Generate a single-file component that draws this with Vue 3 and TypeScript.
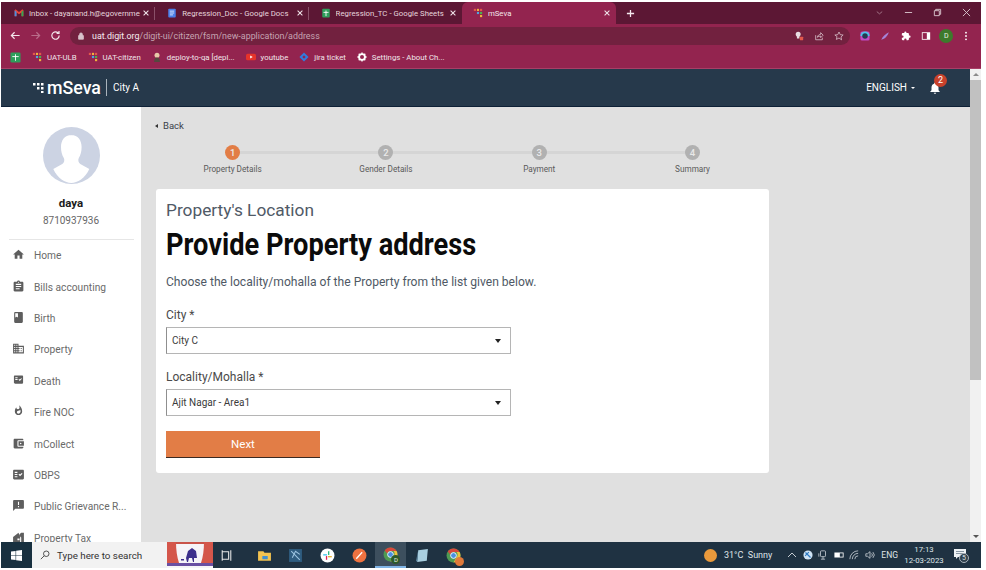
<template>
  <div class="screen">
    <!-- browser tabs -->
    <div class="tabstrip">
      <div v-for="tab in tabs" :key="tab.title" class="tab" :class="{ active: tab.active }">
        <svg class="favicon" viewBox="0 0 16 16" v-html="tab.icon" />
        <span class="tab-title">{{ tab.title }}</span>
        <svg class="tab-close" viewBox="0 0 10 10"><path d="M2 2l6 6M8 2l-6 6" /></svg>
      </div>
      <svg class="new-tab" viewBox="0 0 10 10"><path d="M5 1v8M1 5h8" /></svg>
      <div class="window-controls">
        <svg viewBox="0 0 10 10"><path d="M2 4l3 2.500 3-2.500" /></svg>
        <svg viewBox="0 0 10 10"><path d="M1 5h8" /></svg>
        <svg viewBox="0 0 10 10"><path d="M1.500 3h5.500v5.500h-5.500zM3 3V1.500h5.500V7H7" /></svg>
        <svg viewBox="0 0 10 10"><path d="M1 1l8 8M9 1l-8 8" /></svg>
      </div>
    </div>

    <!-- address bar -->
    <div class="toolbar">
      <svg class="tool" viewBox="0 0 12 12"><path d="M10.500 6h-9M5 2.500L1.500 6 5 9.500" /></svg>
      <svg class="tool dim" viewBox="0 0 12 12"><path d="M1.500 6h9M7 2.500L10.500 6 7 9.500" /></svg>
      <svg class="tool" viewBox="0 0 12 12"><path d="M10 6a4 4 0 1 1-1.200-2.800M9.800 1v2.600H7.200" /></svg>
      <div class="omnibox">
        <svg class="lock" viewBox="0 0 10 10"><path d="M2 4.500h6V9H2zM3.200 4.500V3a1.800 1.800 0 0 1 3.600 0v1.500" /></svg>
        <span class="url"><b>uat.digit.org</b>/digit-ui/citizen/fsm/new-application/address</span>
        <svg class="omni-icon" viewBox="0 0 12 12"><path class="solid-light" d="M5 1a3 3 0 0 1 3 3c0 1.500-1 2-1.500 3v2h-3V7C3 6 2 5.500 2 4a3 3 0 0 1 3-3z" /><rect x="7" y="7" width="4" height="4" rx="0.500" fill="#e2574c" /></svg>
        <svg class="omni-icon line" viewBox="0 0 12 12"><path d="M2 5v5.500h8V8M4 7.500C4.500 5 6.500 4 8 4V2l3 3-3 3V6C6.500 6 5 6.500 4 7.500z" /></svg>
        <svg class="omni-icon line" viewBox="0 0 12 12"><path d="M6 1.200l1.500 3.200 3.500.400-2.600 2.300.7 3.500L6 8.400l-3.100 1.700.7-3.500L1 4.800l3.500-.400z" /></svg>
      </div>
      <div class="extensions">
        <svg viewBox="0 0 12 12"><rect x="0.500" y="0.500" width="11" height="11" rx="2" fill="#c34bc6" /><path d="M0.500 6a5.500 5.500 0 0 1 11 0z" fill="#4fc3e8" /><circle cx="6" cy="6" r="3.300" fill="#263a52" /></svg>
        <svg viewBox="0 0 12 12"><path d="M1.500 10.500C3 7 6.500 3.500 10.500 1.500 9.500 5.500 6 9.500 1.500 10.500z" fill="#a583d8" /></svg>
        <svg viewBox="0 0 24 24"><path fill="#fff" d="M20.500 11H19V7c0-1.100-.9-2-2-2h-4V3.500a2.500 2.500 0 0 0-5 0V5H4c-1.100 0-2 .9-2 2v3.800h1.500a2.700 2.700 0 0 1 0 5.400H2V20c0 1.100.9 2 2 2h3.800v-1.500a2.700 2.700 0 0 1 5.400 0V22H17c1.100 0 2-.9 2-2v-4h1.500a2.500 2.500 0 0 0 0-5z" /></svg>
        <svg viewBox="0 0 12 12"><rect x="1" y="1.500" width="10" height="9" fill="#fff" /><rect x="2" y="2.500" width="5" height="7" fill="#93244f" /></svg>
        <span class="profile">D</span>
        <svg viewBox="0 0 12 12"><circle cx="6" cy="2" r="1.100" fill="#fff" /><circle cx="6" cy="6" r="1.100" fill="#fff" /><circle cx="6" cy="10" r="1.100" fill="#fff" /></svg>
      </div>
    </div>

    <!-- bookmarks -->
    <div class="bookmarks">
      <svg class="mark-sheet" viewBox="0 0 12 12"><rect width="11" height="11" x="0.500" y="0.500" rx="1.500" fill="#2e9e5b" /><path d="M6 2.500v7M2.500 5h7" stroke="#fff" fill="none" /></svg>
      <span v-for="mark in bookmarks" :key="mark.label" class="bookmark">
        <svg viewBox="0 0 12 12" v-html="mark.icon" />
        {{ mark.label }}
      </span>
    </div>

    <div class="app-area">
      <div class="app-main">
        <!-- app header -->
        <header class="app-header">
          <div class="brand">
            <svg class="brand-mark" viewBox="0 0 14 12">
              <rect x="0" y="2" width="2.500" height="2.500" /><rect x="4" y="2" width="2.500" height="2.500" /><rect x="8" y="2" width="2.500" height="2.500" /><rect x="4" y="6" width="2.500" height="2.500" /><rect x="8" y="6" width="2.500" height="2.500" /><rect x="8" y="10" width="2.500" height="2" />
            </svg>
            <span class="brand-name">mSeva</span>
            <span class="brand-city">City A</span>
          </div>
          <div class="header-right">
            <span class="lang">ENGLISH</span>
            <span class="lang-caret" />
            <div class="bell">
              <svg viewBox="0 0 24 24"><path d="M12 22c1.100 0 2-.9 2-2h-4c0 1.100.89 2 2 2zm6-6v-5c0-3.070-1.640-5.640-4.500-6.320V4c0-.83-.67-1.500-1.500-1.500s-1.500.67-1.500 1.500v.68C7.630 5.360 6 7.920 6 11v5l-2 2v1h16v-1l-2-2z" /></svg>
              <span class="badge">2</span>
            </div>
          </div>
        </header>

        <div class="page">
          <!-- sidebar -->
          <aside class="sidebar">
            <div class="avatar">
              <svg viewBox="0 0 57 57">
                <circle cx="28.500" cy="28.500" r="28.500" fill="#ccd3e3" />
                <path fill="#fff" d="M28.500 8c-7 0-10.500 5.500-10.500 12 0 4.500 1 8 2.800 11 1 2 .5 4.500-1.500 6-3 2-6 3-9 5 4 9 12 14 18 14s14-5 18-14c-3-2-6-3-9-5-2-1.500-2.500-4-1.500-6 1.800-3 2.800-6.500 2.800-11 0-6.500-3.500-12-10.500-12z" />
                <path fill="#ccd3e3" d="M20 55.500c5 1.500 12 1.500 17 0l-8.500 1.500z" />
              </svg>
            </div>
            <div class="user-name">daya</div>
            <div class="user-phone">8710937936</div>
            <div class="side-divider" />
            <nav class="nav">
              <div v-for="item in navItems" :key="item.label" class="nav-item" :class="{ small: item.small }">
                <svg viewBox="0 0 24 24"><path :d="item.icon" /></svg>
                <span>{{ item.label }}</span>
              </div>
            </nav>
          </aside>

          <!-- main content -->
          <main class="content">
            <div class="back"><span class="back-arrow" />Back</div>
            <div class="stepper">
              <div v-for="(step, i) in steps" :key="step" class="step" :class="{ current: i === 0 }">
                <span class="step-dot">{{ i + 1 }}</span>
                <span class="step-label">{{ step }}</span>
              </div>
            </div>

            <section class="card">
              <div class="card-sub">Property's Location</div>
              <h1 class="card-title">Provide Property address</h1>
              <p class="card-desc">Choose the locality/mohalla of the Property from the list given below.</p>

              <label class="field-label">City *</label>
              <div class="select"><span>City C</span><i class="select-arrow" /></div>

              <label class="field-label">Locality/Mohalla *</label>
              <div class="select"><span>Ajit Nagar - Area1</span><i class="select-arrow" /></div>

              <button class="next-btn">Next</button>
            </section>
          </main>
        </div>
      </div>

      <div class="scrollbar">
        <i class="scroll-up" />
        <div class="scroll-thumb" />
        <i class="scroll-down" />
      </div>
    </div>

    <!-- windows taskbar -->
    <footer class="taskbar">
      <div class="start">
        <svg viewBox="0 0 12 12"><path fill="#fff" d="M0 1.700l5-.7v4.700H0zM5.600.9L12 0v5.700H5.600zM0 6.300h5V11l-5-.7zM5.600 6.300H12V12l-6.400-.9z" /></svg>
      </div>
      <div class="search">
        <svg viewBox="0 0 12 12"><circle cx="7.500" cy="4.500" r="3.300" /><path d="M5 7L1 11" /></svg>
        <span>Type here to search</span>
      </div>
      <div class="promo">
        <svg viewBox="0 0 46 26">
          <rect width="46" height="26" fill="#f6f4f8" />
          <path d="M0 0h46v2H0z" fill="#c9534a" />
          <path d="M0 0h9c0 8 1 15 3 21H0zM46 0h-9c0 8-1 15-3 21h12z" fill="#d4564b" />
          <path d="M19 16l2-7 4-3 4 3 1 7h-3v4h-1l-1-4h-3l-1 4h-1z" fill="#3d2f8c" />
          <rect x="14" y="17" width="3" height="1.500" fill="#3d2f8c" />
          <rect y="21" width="46" height="3" fill="#6a4fa3" />
          <rect y="24" width="46" height="2" fill="#f6f4f8" />
        </svg>
      </div>
      <div class="task-apps">
        <span class="app"><svg viewBox="0 0 14 14"><path d="M3 2v10M11 2v10M3 3.500h6v7H3" stroke="#e8e8e8" fill="none" /></svg></span>
        <span class="app"><svg viewBox="0 0 14 14"><path d="M1 3h5l1 1.500h6V12H1z" fill="#f3c350" /><rect x="5" y="7.500" width="5" height="3" fill="#3f8fd2" /></svg></span>
        <span class="app"><svg viewBox="0 0 14 14"><rect x="1" y="1" width="12" height="12" fill="#2f5d80" /><path d="M3 3l8 8M4 9l3-6 4 3" stroke="#9cc3df" fill="none" /></svg></span>
        <span class="app"><svg viewBox="0 0 14 14"><circle cx="7" cy="7" r="6.500" fill="#fff" /><rect x="3" y="5.800" width="3.500" height="1.200" fill="#36c5f0" /><rect x="7.500" y="3" width="1.200" height="3.500" fill="#2eb67d" /><rect x="7.500" y="7.500" width="3.500" height="1.200" fill="#ecb22e" /><rect x="5.500" y="7.500" width="1.200" height="3.500" fill="#e01e5a" /></svg></span>
        <span class="app"><svg viewBox="0 0 14 14"><circle cx="7" cy="7" r="6.500" fill="#ef7240" /><path d="M4 10l5.500-6" stroke="#fff" stroke-width="1.200" /></svg></span>
        <span class="app current">
          <svg viewBox="0 0 14 14" v-html="chromeIcon" />
          <em class="chrome-badge">D</em>
        </span>
        <span class="app"><svg viewBox="0 0 14 14"><path d="M3 2l9-1-1 11-9 1z" fill="#a9cfe0" /><path d="M3 2L2 13l-1-1z" fill="#5d8aa5" /></svg></span>
        <span class="app">
          <svg viewBox="0 0 14 14" v-html="chromeIcon" />
          <em class="chrome-badge orange" />
        </span>
      </div>

      <div class="tray">
        <span class="sun" />
        <span class="weather">31°C&nbsp; Sunny</span>
        <svg class="tray-icon caret" viewBox="0 0 10 10"><path d="M1 7l4-4 4 4" /></svg>
        <svg class="tray-icon" viewBox="0 0 12 12"><circle cx="6" cy="6" r="5.500" fill="#cfe3f5" stroke="none" /><path d="M3 3l6 6M2.500 7L7 2.500" stroke="#2b79c2" stroke-width="1.400" /></svg>
        <svg class="tray-icon" viewBox="0 0 12 12"><rect x="3" y="1" width="6" height="7" rx="1" /><path d="M1 4v4M6 8v3M3.500 11h5" /></svg>
        <svg class="tray-icon" viewBox="0 0 12 12"><rect x="0.500" y="3" width="11" height="6" fill="#fff" stroke="none" /><rect x="7" y="4" width="3.500" height="4" fill="#1f3242" stroke="none" /></svg>
        <svg class="tray-icon" viewBox="0 0 12 12"><path d="M1 11a10 10 0 0 1 10-10M4 11a7 7 0 0 1 7-7M7 11a4 4 0 0 1 4-4" /></svg>
        <svg class="tray-icon" viewBox="0 0 12 12"><path d="M1 4.500h2L6 2v8L3 7.500H1zM8 4a3 3 0 0 1 0 4M9.500 2.500a5 5 0 0 1 0 7" /></svg>
        <span class="lang-tray">ENG</span>
        <div class="clock"><span>17:13</span><span>12-03-2023</span></div>
        <div class="notify">
          <svg viewBox="0 0 14 12"><path d="M1 1h12v8H5L3 11V9H1z" fill="#eef2f5" /><path d="M3 3.500h8M3 5.500h8" stroke="#8796a3" /></svg>
          <span class="notify-count">5</span>
        </div>
      </div>
    </footer>
  </div>
</template>

<script setup lang="ts">
const chromeIcon =
  '<circle cx="7" cy="7" r="6.5" fill="#4f9a52"/><path d="M7 .5a6.500 6.500 0 0 1 5.700 3.300H7A3.300 3.300 0 0 0 3.900 6L1.600 3.300A6.500 6.500 0 0 1 7 .5z" fill="#d9483b"/><path d="M12.700 3.800A6.500 6.500 0 0 1 7 13.500L9.800 8.600a3.300 3.300 0 0 0 0-4.800z" fill="#efc13d"/><circle cx="7" cy="7" r="2.700" fill="#4a8fe0" stroke="#fff" stroke-width=".8"/>'

const dots =
  '<rect x="1" y="1" width="2.600" height="2.600" fill="#e2574c"/><rect x="4.700" y="1" width="2.600" height="2.600" fill="#f0b23c"/><rect x="8.400" y="1" width="2.600" height="2.600" fill="#e2574c"/><rect x="4.700" y="4.700" width="2.600" height="2.600" fill="#4fa3e0"/><rect x="8.400" y="4.700" width="2.600" height="2.600" fill="#4caf50"/><rect x="8.400" y="8.400" width="2.600" height="2.600" fill="#f0b23c"/>'

const tabs = [
  {
    title: 'Inbox - dayanand.h@egovernme',
    icon: '<path d="M1 3.500V13h3V7l4 3 4-3v6h3V3.500L13.500 2 8 6.500 2.500 2z" fill="#ea4335"/><path d="M1 3.500V13h3V6z" fill="#4a8fe0"/><path d="M15 3.500V13h-3V6z" fill="#34a853"/>'
  },
  {
    title: 'Regression_Doc - Google Docs',
    icon: '<rect x="2" y="1" width="12" height="14" rx="1.500" fill="#4a7fe8"/><path d="M4.500 5h7M4.500 8h7M4.500 11h5" stroke="#fff" stroke-width="1.200"/>'
  },
  {
    title: 'Regression_TC - Google Sheets',
    icon: '<rect x="2" y="1" width="12" height="14" rx="1.500" fill="#2e9e5b"/><path d="M8 4v9M4 7h8" stroke="#fff" stroke-width="1.400"/>'
  },
  { title: 'mSeva', active: true, icon: '<g transform="scale(1.33)">' + dots + '</g>' }
]

const bookmarks = [
  { label: 'UAT-ULB', icon: dots },
  { label: 'UAT-citizen', icon: dots },
  {
    label: 'deploy-to-qa [depl...',
    icon: '<circle cx="6" cy="4" r="3" fill="#e8c9a8"/><path d="M2.500 12c0-4 1.500-5.500 3.500-5.500S9.500 8 9.500 12z" fill="#55483f"/>'
  },
  {
    label: 'youtube',
    icon: '<rect y="2" width="12" height="8" rx="2" fill="#e5332a"/><path d="M5 4.300L8 6 5 7.700z" fill="#fff"/>'
  },
  {
    label: 'jira ticket',
    icon: '<path d="M6 .5L11.500 6 6 11.500.5 6z" fill="#2f7de1"/><path d="M6 4L8 6 6 8 4 6z" fill="#93244f"/>'
  },
  {
    label: 'Settings - About Ch...',
    icon: '<circle cx="6" cy="6" r="3.500" fill="none" stroke="#fff" stroke-width="2.200"/><path d="M6 .5v2M6 9.500v2M.5 6h2M9.500 6h2M2.100 2.100l1.400 1.400M8.500 8.500l1.400 1.400M9.900 2.100L8.500 3.500M3.500 8.500l-1.400 1.400" stroke="#fff" stroke-width="1.600"/>'
  }
]

const navItems: { label: string; icon: string; small?: boolean }[] = [
  { label: 'Home', icon: 'M10 20v-6h4v6h5v-8h3L12 3 2 12h3v8z' },
  {
    label: 'Bills accounting',
    icon: 'M19 3h-4.180C14.400 1.840 13.300 1 12 1c-1.300 0-2.400.84-2.820 2H5c-1.100 0-2 .9-2 2v14c0 1.100.9 2 2 2h14c1.100 0 2-.9 2-2V5c0-1.100-.9-2-2-2zm-7 0c.55 0 1 .45 1 1s-.45 1-1 1-1-.45-1-1 .45-1 1-1zm2 14H7v-2h7v2zm3-4H7v-2h10v2zm0-4H7V7h10v2z'
  },
  {
    label: 'Birth',
    icon: 'M18 2H6c-1.100 0-2 .9-2 2v16c0 1.100.9 2 2 2h12c1.100 0 2-.9 2-2V4c0-1.100-.9-2-2-2zM6 4h5v8l-2.500-1.500L6 12V4z'
  },
  {
    label: 'Property',
    icon: 'M12 7V3H2v18h20V7H12zM6 19H4v-2h2v2zm0-4H4v-2h2v2zm0-4H4V9h2v2zm0-4H4V5h2v2zm4 12H8v-2h2v2zm0-4H8v-2h2v2zm0-4H8V9h2v2zm0-4H8V5h2v2zm10 12h-8v-2h2v-2h-2v-2h2v-2h-2V9h8v10zm-2-8h-2v2h2v-2zm0 4h-2v2h2v-2z'
  },
  {
    label: 'Death',
    small: true,
    icon: 'M20 3H4c-1.100 0-2 .9-2 2v14c0 1.100.9 2 2 2h16c1.100 0 2-.9 2-2V5c0-1.100-.9-2-2-2zM10 13H5v-2h5v2zm0-4H5V7h5v2zm4.820 6L12 12.160l1.410-1.410 1.410 1.420L17.990 9l1.420 1.420L14.820 15z'
  },
  {
    label: 'Fire NOC',
    small: true,
    icon: 'M13.500.67s.74 2.650.74 4.800c0 2.060-1.350 3.730-3.410 3.730-2.070 0-3.630-1.670-3.630-3.730l.03-.36C5.210 7.510 4 10.620 4 14c0 4.420 3.580 8 8 8s8-3.580 8-8C20 8.610 17.410 3.800 13.500.67zM11.710 19c-1.780 0-3.220-1.400-3.220-3.140 0-1.620 1.050-2.760 2.810-3.120 1.770-.36 3.600-1.210 4.620-2.580.39 1.290.59 2.650.59 4.040 0 2.650-2.150 4.800-4.800 4.800z'
  },
  {
    label: 'mCollect',
    icon: 'M21 18v1c0 1.100-.9 2-2 2H5c-1.110 0-2-.9-2-2V5c0-1.100.89-2 2-2h14c1.100 0 2 .9 2 2v1h-9c-1.110 0-2 .9-2 2v8c0 1.100.89 2 2 2h9zm-9-2h10V8H12v8zm4-2.500c-.83 0-1.500-.67-1.500-1.500s.67-1.500 1.500-1.500 1.500.67 1.500 1.500-.67 1.500-1.500 1.500z'
  },
  {
    label: 'OBPS',
    icon: 'M20 3H4c-1.100 0-2 .9-2 2v14c0 1.100.9 2 2 2h16c1.100 0 2-.9 2-2V5c0-1.100-.9-2-2-2zM10 17H5v-2h5v2zm0-4H5v-2h5v2zm0-4H5V7h5v2zm4.820 6L12 12.160l1.410-1.410 1.410 1.420L17.990 9l1.420 1.420L14.820 15z'
  },
  {
    label: 'Public Grievance R...',
    icon: 'M20 2H4c-1.100 0-1.990.9-1.990 2L2 22l4-4h14c1.100 0 2-.9 2-2V4c0-1.100-.9-2-2-2zm-7 9h-2V5h2v6zm0 4h-2v-2h2v2z'
  },
  {
    label: 'Property Tax',
    icon: 'M12 3L2 11v10h13V11zM17 3h5v18h-5v-9l-3-3V6zM10 14h4v3h-4z'
  }
]

const steps = ['Property Details', 'Gender Details', 'Payment', 'Summary']
</script>

<style>
html,
body {
  margin: 0;
  background: #fff;
  overflow: hidden;
}
</style>

<style scoped>
.screen {
  width: 980px;
  height: 566px;
  margin: 2px 0 0 1px;
  display: flex;
  flex-direction: column;
  font-family: Roboto, "Liberation Sans", sans-serif;
  overflow: hidden;
}

/* tabs */
.tabstrip {
  height: 22px;
  flex: none;
  background: #5c1734;
  display: flex;
  align-items: stretch;
  padding-left: 1px;
}

.tab {
  width: 153.300px;
  display: flex;
  align-items: center;
  padding: 0 5px 0 12px;
  box-sizing: border-box;
  color: #e6d5dc;
  font-size: 7.800px;
  position: relative;
}

.tab + .tab::before {
  content: "";
  position: absolute;
  left: -1px;
  top: 5px;
  height: 13px;
  width: 1px;
  background: #8a5069;
}

.tab.active {
  background: #93244f;
  border-radius: 6px 6px 0 0;
  color: #f2e4ea;
  width: 154px;
  padding-left: 11px;
}

.tab.active::before {
  display: none;
}

.favicon {
  width: 10px;
  height: 10px;
  flex: none;
  margin-right: 5px;
}

.tab-title {
  flex: 1;
  white-space: nowrap;
  overflow: hidden;
}

.tab-close {
  width: 8px;
  height: 8px;
  flex: none;
  fill: none;
  stroke: #f0e4e9;
  stroke-width: 1.300;
}

.new-tab {
  width: 9px;
  height: 9px;
  align-self: center;
  margin-left: 10px;
  fill: none;
  stroke: #f4e8ed;
  stroke-width: 1.400;
}

.window-controls {
  margin-left: auto;
  display: flex;
  gap: 20px;
  align-items: center;
  padding: 0 10px 2px 0;
}

.window-controls svg {
  width: 9px;
  height: 9px;
  fill: none;
  stroke: #dcc9d1;
  stroke-width: 1;
}

.window-controls svg:first-child {
  stroke: #a67a8c;
}

/* toolbar */
.toolbar {
  height: 23px;
  flex: none;
  background: #93244f;
  display: flex;
  align-items: center;
  padding-left: 9px;
}

.tool {
  width: 11px;
  height: 11px;
  margin-right: 9px;
  fill: none;
  stroke: #f3e6eb;
  stroke-width: 1.300;
}

.tool.dim {
  stroke: #b96d8a;
}

.omnibox {
  width: 780px;
  height: 18px;
  margin-left: 0;
  background: #72213f;
  border-radius: 9px;
  display: flex;
  align-items: center;
  padding: 0 6px 0 7px;
  box-sizing: border-box;
}

.lock {
  width: 8px;
  height: 8px;
  margin-right: 7px;
  fill: #d8c3cc;
  stroke: #d8c3cc;
}

.url {
  flex: 1;
  font-size: 8.900px;
  color: #c5a4b2;
  white-space: nowrap;
}

.url b {
  font-weight: 400;
  color: #f5ecf0;
}

.omni-icon {
  width: 10px;
  height: 10px;
  margin-left: 10px;
}

.solid-light {
  fill: #e9dde2;
}

.omni-icon.line {
  fill: none;
  stroke: #ddc9d2;
  stroke-width: 0.900;
}

.extensions {
  display: flex;
  align-items: center;
  gap: 10.300px;
  margin-left: 10px;
}

.extensions svg {
  width: 10px;
  height: 10px;
}

.profile {
  width: 14px;
  height: 14px;
  margin: 0 -2px;
  border-radius: 50%;
  background: #3d7a2c;
  color: #e8f0e2;
  font-size: 7px;
  display: flex;
  align-items: center;
  justify-content: center;
}

/* bookmarks */
.bookmarks {
  height: 22px;
  flex: none;
  background: #93244f;
  display: flex;
  align-items: center;
  padding: 0 0 1px 9px;
  gap: 11px;
  color: #f0e4e9;
  font-size: 7.800px;
  box-sizing: border-box;
  border-bottom: 1px solid #a83f67;
}

.mark-sheet {
  width: 11px;
  height: 11px;
}

.bookmark {
  display: flex;
  align-items: center;
  gap: 5px;
  white-space: nowrap;
}

.bookmark svg {
  width: 10px;
  height: 10px;
}

.app-area {
  flex: 1;
  min-height: 0;
  display: flex;
}

.app-main {
  flex: 1;
  min-width: 0;
  display: flex;
  flex-direction: column;
}

/* app header */
.app-header {
  height: 38px;
  flex: none;
  background: #26394b;
  border-bottom: 1px solid #0d2036;
  box-sizing: border-box;
  display: flex;
  align-items: center;
  justify-content: space-between;
  color: #fff;
  padding: 0 28px 0 32px;
}

.brand {
  display: flex;
  align-items: center;
}

.brand-mark {
  width: 14px;
  height: 12px;
  fill: #fff;
  margin-top: -2px;
}

.brand-name {
  font-size: 17.800px;
  font-weight: 500;
}

.brand-city {
  font-size: 10px;
  margin-left: 5px;
  padding-left: 6px;
  border-left: 1px solid #a9b3bc;
  line-height: 17px;
}

.header-right {
  display: flex;
  align-items: center;
}

.lang {
  font-size: 10px;
}

.lang-caret {
  width: 0;
  height: 0;
  margin: 1px 0 0 4px;
  border: 2px solid transparent;
  border-top: 2.500px solid #fff;
  border-bottom: 0;
}

.bell {
  position: relative;
  width: 14px;
  height: 14px;
  margin-left: 13px;
}

.bell svg {
  width: 14px;
  height: 14px;
  fill: #fff;
  display: block;
}

.badge {
  position: absolute;
  left: 6px;
  top: -7px;
  width: 13px;
  height: 13px;
  border-radius: 50%;
  background: #c8412b;
  font-size: 9px;
  line-height: 13px;
  text-align: center;
}

/* page */
.page {
  flex: 1;
  min-height: 0;
  display: flex;
  background: #e0e0e0;
  overflow: hidden;
}

.sidebar {
  width: 140px;
  flex: none;
  background: #fff;
  display: flex;
  flex-direction: column;
  align-items: center;
}

.avatar {
  width: 57px;
  height: 57px;
  margin-top: 20px;
  flex: none;
}

.avatar svg {
  width: 57px;
  height: 57px;
  display: block;
}

.user-name {
  margin-top: 12px;
  font-size: 11.500px;
  font-weight: 700;
  color: #1c1c1c;
  line-height: 14px;
}

.user-phone {
  margin-top: 4px;
  font-size: 10px;
  color: #666;
  line-height: 14px;
}

.side-divider {
  width: 125px;
  height: 1px;
  background: #e6e6e6;
  margin-top: 11px;
  flex: none;
}

.nav {
  width: 100%;
}

.nav-item {
  height: 31.400px;
  display: flex;
  align-items: center;
  padding-left: 11px;
  font-size: 10.200px;
  color: #6a6a6a;
  white-space: nowrap;
}

.nav-item svg {
  width: 13px;
  height: 13px;
  fill: #5e5e5e;
  margin-right: 9px;
  flex: none;
  margin-top: -2px;
}

.nav-item.small svg {
  width: 11px;
  height: 11px;
  margin: -4px 10px 0 1px;
}

.content {
  flex: 1;
  min-width: 0;
  padding: 13px 0 0 15px;
}

.back {
  display: flex;
  align-items: center;
  margin-left: -1px;
  font-size: 9.500px;
  color: #3a3f4a;
  line-height: 12px;
}

.back-arrow {
  width: 0;
  height: 0;
  margin-right: 5px;
  border: 2px solid transparent;
  border-right: 3px solid #333;
  border-left: 0;
}

.stepper {
  display: grid;
  grid-template-columns: repeat(4, 153.300px);
  margin-top: 13px;
}

.step {
  display: flex;
  flex-direction: column;
  align-items: center;
  position: relative;
}

.step:not(:last-child)::after {
  content: "";
  position: absolute;
  left: 50%;
  top: 6px;
  width: 100%;
  height: 3px;
  background: #d5d5d5;
}

.step-dot {
  width: 15px;
  height: 15px;
  border-radius: 50%;
  background: #b1b1b1;
  color: #e9e9e9;
  font-size: 9.500px;
  line-height: 15px;
  text-align: center;
  font-weight: 500;
  position: relative;
  z-index: 1;
}

.step.current .step-dot {
  background: #e27d46;
}

.step-label {
  margin-top: 4px;
  font-size: 8.200px;
  line-height: 11px;
  color: #5a5a5a;
}

.card {
  width: 613px;
  height: 284px;
  margin-top: 14px;
  box-sizing: border-box;
  background: #fff;
  border-radius: 3px;
  padding: 11px 10px 0;
}

.card-sub {
  font-size: 17.300px;
  line-height: 20px;
  color: #505a66;
}

.card-title {
  margin: 5px 0 0;
  font-size: 32px;
  line-height: 38px;
  font-weight: 700;
  color: #0b0b0b;
  transform: scaleX(0.85);
  transform-origin: left center;
  white-space: nowrap;
}

.card-desc {
  margin: 11px 0 0;
  font-size: 12.100px;
  line-height: 16px;
  color: #4f5965;
}

.field-label {
  display: block;
  margin-top: 17px;
  font-size: 12px;
  line-height: 16px;
  color: #4a4a4a;
}

.select {
  width: 345px;
  height: 27px;
  margin-top: 4px;
  box-sizing: border-box;
  border: 1px solid #b5b5b5;
  border-left-color: #8f8f8f;
  display: flex;
  align-items: center;
  justify-content: space-between;
  padding: 0 9px 0 5px;
  font-size: 10px;
  color: #3b3b3b;
}

.select + .field-label {
  margin-top: 15px;
}

.select-arrow {
  width: 0;
  height: 0;
  border: 3.500px solid transparent;
  border-top: 4px solid #222;
  border-bottom: 0;
}

.next-btn {
  display: block;
  width: 154px;
  height: 27px;
  margin-top: 15px;
  padding: 0;
  border: 0;
  border-bottom: 1.500px solid #3a2a22;
  background: #e27d46;
  color: #fff;
  font-family: inherit;
  font-size: 11.500px;
}

.scrollbar {
  width: 11px;
  flex: none;
  background: #f1f1f1;
  display: flex;
  flex-direction: column;
  align-items: center;
  padding-top: 4px;
  box-sizing: border-box;
}

.scroll-up,
.scroll-down {
  width: 0;
  height: 0;
  border: 3px solid transparent;
}

.scroll-up {
  border-bottom: 3px solid #8c8c8c;
  border-top: 0;
}

.scroll-down {
  border-top: 3px solid #555;
  border-bottom: 0;
  margin-top: auto;
  margin-bottom: 4px;
}

.scroll-thumb {
  width: 100%;
  height: 300px;
  background: #c1c1c1;
  margin-top: 4px;
}

/* taskbar */
.taskbar {
  height: 26px;
  flex: none;
  background: #1f3242;
  display: flex;
  align-items: stretch;
}

.start {
  width: 31px;
  display: flex;
  align-items: center;
  justify-content: center;
  background: #18303f;
}

.start svg {
  width: 11px;
  height: 11px;
}

.search {
  width: 135px;
  background: #f2f2f2;
  display: flex;
  align-items: center;
  padding-left: 8px;
  box-sizing: border-box;
  font-size: 9.800px;
  color: #333;
}

.search svg {
  width: 10px;
  height: 10px;
  margin-right: 7px;
  fill: none;
  stroke: #333;
}

.promo {
  width: 46px;
}

.promo svg {
  width: 46px;
  height: 26px;
  display: block;
}

.task-apps {
  display: flex;
  margin-left: -2.500px;
}

.app {
  width: 31.600px;
  display: flex;
  align-items: center;
  justify-content: center;
  position: relative;
  box-sizing: border-box;
}

.app:first-child {
  margin-right: 6.400px;
}

.app svg {
  width: 15px;
  height: 15px;
}

.app.current {
  background: #3d4f5e;
  border-bottom: 2px solid #7fb4e6;
}

.chrome-badge {
  position: absolute;
  right: 6px;
  bottom: 2px;
  width: 9px;
  height: 9px;
  border-radius: 50%;
  background: #2e5a2a;
  color: #e8f0e2;
  font-size: 6px;
  line-height: 9px;
  text-align: center;
  font-style: normal;
}

.chrome-badge.orange {
  background: #e0793a;
}

.tray {
  margin-left: auto;
  display: flex;
  align-items: center;
  color: #dfe4e8;
  font-size: 9px;
}

.sun {
  width: 13px;
  height: 13px;
  border-radius: 50%;
  background: #ea9a3c;
  margin-right: 7px;
}

.weather {
  margin-right: 15px;
  white-space: nowrap;
}

.tray-icon {
  width: 10px;
  height: 10px;
  margin-right: 5.500px;
  fill: none;
  stroke: #d8dee3;
  stroke-width: 0.900;
}

.lang-tray {
  margin-left: 1px;
  font-size: 8.500px;
}

.clock {
  display: flex;
  flex-direction: column;
  align-items: center;
  margin-left: 7px;
  width: 38px;
  font-size: 7.800px;
  line-height: 11px;
  white-space: nowrap;
}

.notify {
  position: relative;
  width: 16px;
  height: 14px;
  margin: 0 12px 0 10px;
}

.notify svg {
  width: 14px;
  height: 12px;
  display: block;
}

.notify-count {
  position: absolute;
  left: 6px;
  top: 5px;
  width: 10px;
  height: 10px;
  border-radius: 50%;
  background: #30404d;
  border: 1px solid #aab4bc;
  box-sizing: border-box;
  font-size: 7px;
  line-height: 8px;
  text-align: center;
}
</style>
